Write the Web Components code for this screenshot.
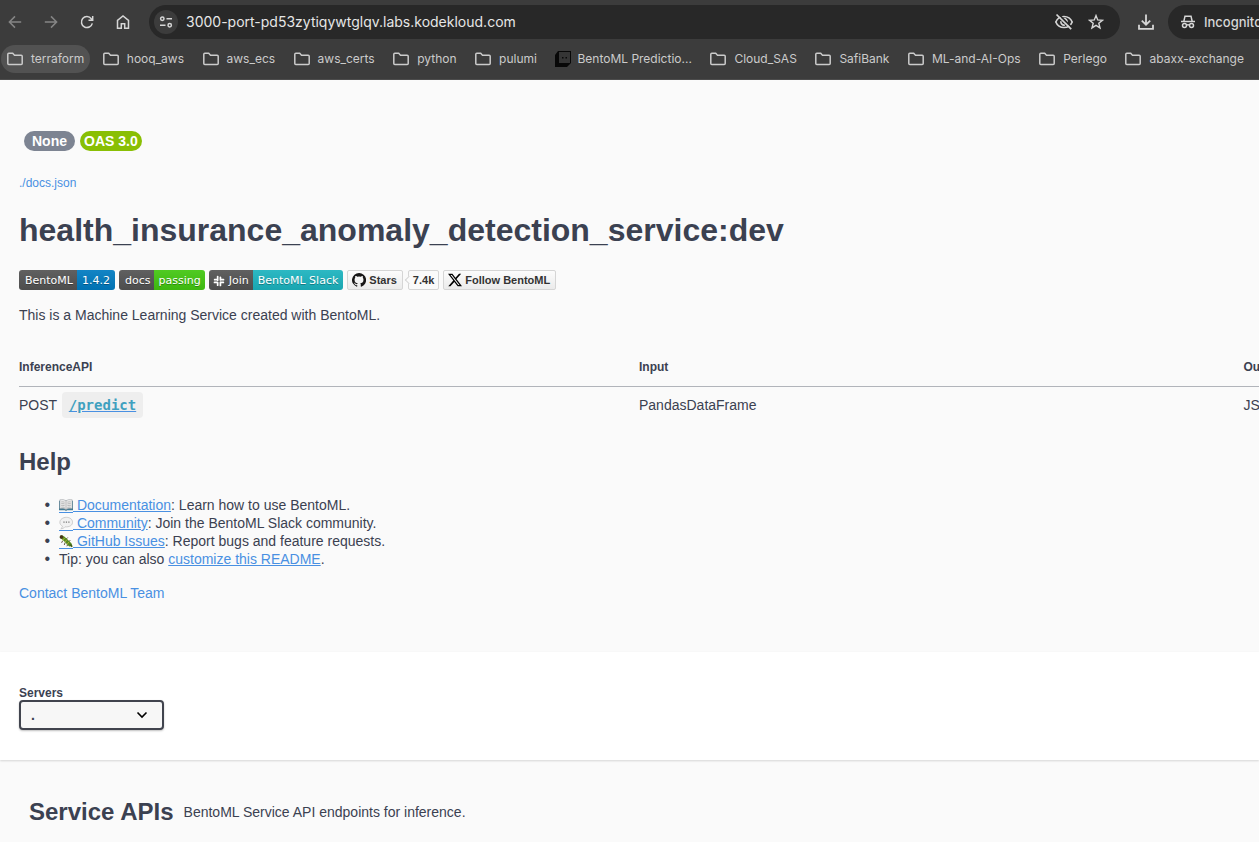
<!DOCTYPE html>
<html lang="en">
<head>
<meta charset="utf-8">
<title>health_insurance_anomaly_detection_service:dev</title>
<style>
  body { margin: 0; background: #fafafa; color: #3b4151; font-family: "Liberation Sans", Arial, sans-serif; font-size: 14px; line-height: 18px; overflow-x: clip; }
</style>
</head>
<body>
<app-page></app-page>
<script>
const define = (name, html) => {
  const template = document.createElement("template");
  template.innerHTML = html;
  customElements.define(name, class extends HTMLElement {
    constructor() {
      super();
      this.attachShadow({ mode: "open" }).append(template.content.cloneNode(true));
    }
  });
};

/* ---------- icons ---------- */
const stroke = (box, body, width = 1.6) =>
  `<svg viewBox="0 0 ${box} ${box}" fill="none" stroke="currentColor" stroke-width="${width}">${body}</svg>`;
const icons = {
  back: stroke(16, '<path d="M14.2 8H2.6M8 2.4 2.4 8 8 13.600"/>', 1.5),
  forward: stroke(16, '<path d="M1.800 8H13.400M8 2.400 13.600 8 8 13.600"/>', 1.5),
  reload: stroke(16, '<path d="M13.300 9.300A5.500 5.500 0 1 1 12.300 4.700L13.600 6.200M13.700 2V6.200H9.500"/>', 1.5),
  home: stroke(16, '<path d="M2.500 14.200V6.400L8 2l5.500 4.400v7.800H9.700V9.700H6.300v4.500z"/>', 1.5),
  tune: stroke(16, '<circle cx="4.300" cy="4.700" r="1.700"/><path d="M8.500 4.700H14M2 11.300h5.500"/><circle cx="11.700" cy="11.300" r="1.700"/>', 1.5),
  eye: stroke(20, '<path d="M1.800 10c1.500-3.600 4.600-5.500 8.200-5.500s6.700 1.900 8.200 5.500c-1.500 3.600-4.600 5.500-8.200 5.500S3.300 13.600 1.800 10z"/><path d="M12.900 11.300A3.200 3.200 0 0 0 9 6.900M7 9.200a3.200 3.200 0 0 0 3.800 3.900"/><path d="M4 1.600 18 15.700" stroke="#282828" stroke-width="1.800"/><path d="M2.500 2.500 17.200 17.200"/>', 1.7),
  star: stroke(16, '<path d="m8 1.600 1.700 4.300 4.700.4-3.600 3 1.200 4.600L8 11.400l-4 2.500 1.200-4.600-3.600-3 4.700-.4z"/>', 1.4),
  download: stroke(18, '<path d="M9 1.500v10M4.800 7.600 9 11.700l4.200-4.100M2 11.800v4h14v-4"/>', 1.8),
  incognito: '<svg viewBox="0 0 16 16" fill="none" stroke="currentColor" stroke-width="1.500"><path d="M3.900 7 5 2.200h6L12.100 7M1 7.400h14"/><circle cx="4.500" cy="11.500" r="2"/><circle cx="11.500" cy="11.500" r="2"/><path d="M6.500 11.200q1.500-.8 3 0"/></svg>',
  folder: stroke(16, '<path d="M.8 3.300q0-1 1-1h3.900l1.800 1.900h6.700q1 0 1 1v7.300q0 1-1 1H1.800q-1 0-1-1z"/>', 1.5),
  bento: '<svg viewBox="0 0 16 16"><path d="M3 0h13v12l-4 4H0V4z" fill="#080808"/><path d="M4 1h11v11H4z" fill="#353535"/><path d="M7 6h1.500v1.500H7zM10.500 6H12v1.500h-1.500z" fill="#080808"/></svg>',
  slack: '<svg viewBox="0 0 16 16" stroke="#fff" stroke-width="2.300" stroke-linecap="round" fill="none"><path d="M6.200 2v5M2.200 6.300h4M9.900 3v3.500M10 6.300h4M2 9.900h4M6.200 10v3.500M9.900 9.800V14M10 9.900h3.800"/></svg>',
  github: '<svg viewBox="0 0 16 16"><path fill="#181717" d="M8 0a8 8 0 0 0-2.530 15.590c.4.070.55-.17.55-.38v-1.340c-2.230.48-2.700-1.070-2.700-1.070-.36-.93-.89-1.170-.89-1.170-.73-.5.050-.49.050-.49.810.060 1.230.83 1.230.83.720 1.230 1.880.87 2.340.67.070-.52.280-.87.510-1.070-1.780-.2-3.640-.89-3.640-3.950 0-.87.310-1.590.82-2.150-.08-.2-.36-1.020.08-2.120 0 0 .67-.22 2.200.82a7.600 7.600 0 0 1 4 0c1.530-1.040 2.200-.82 2.200-.82.440 1.100.160 1.920.080 2.120.51.560.82 1.270.82 2.150 0 3.070-1.870 3.750-3.650 3.950.29.250.54.730.54 1.480v2.190c0 .21.15.46.55.38A8 8 0 0 0 8 0z"/></svg>',
  x: '<svg viewBox="0 0 24 24"><path fill="#000" d="M18.900 1.150h3.680l-8.040 9.190L24 22.850h-7.410l-5.800-7.590-6.640 7.590H.47l8.600-9.830L0 1.150h7.590l5.240 6.930zM17.610 20.640h2.040L6.490 3.240H4.300z"/></svg>',
  book: '<svg viewBox="0 0 16 16"><path d="M0 3h16v11H9L8 15l-1-1H0z" fill="#437a91"/><path d="M1 2q4-1 7 1 3-2 7-1v10q-4-1-7 1-3-2-7-1z" fill="#eceded" stroke="#9ba0a3" stroke-width=".6"/><path d="M8 3v10M2.500 4.500q2-.4 4 .3M2.500 6.500q2-.4 4 .3M2.500 8.500q2-.4 4 .3M2.500 10.500q2-.4 4 .3M9.500 4.800q2-.7 4-.3M9.500 6.800q2-.7 4-.3M9.500 8.800q2-.7 4-.3M9.500 10.800q2-.7 4-.3" stroke="#999" stroke-width=".7" fill="none"/></svg>',
  speech: '<svg viewBox="0 0 16 16"><path d="M8.500 1.500C4.500 1.500 1 3.900 1 7.200c0 2 1.200 3.500 3 4.500-.2 1.300-.9 2.300-2 3 2.200-.1 3.800-1 4.800-2.300 5 .5 8.700-1.800 8.700-5.200 0-3.300-3-5.700-7-5.700z" fill="#f1f1f1" stroke="#bbb" stroke-width=".8"/><path d="M5 7h1.400M7.800 7h1.400M10.600 7H12" stroke="#777" stroke-width="1.500"/></svg>',
  bug: '<svg viewBox="0 0 16 16"><path d="M2 2.500 4.500 5M8 6l2-2M4 8l-1 2M7 10l-1 2.500M11 8.500l2-1M10 12l-1 2" stroke="#493422" stroke-width="1"/><path d="M3 3.500C6 4.500 8 8 12.500 12" stroke="#568a20" stroke-width="4.300" fill="none" stroke-linecap="round"/><path d="M6.500 4.500 4 7.500M9 6.500 6.500 9.500M11.500 9 9 12" stroke="#b8b535" stroke-width="1"/><circle cx="2.800" cy="3.300" r="2" fill="#4b311c"/><path d="m13 12 2 2.500" stroke="#3e5a16" stroke-width="2"/></svg>',
  chevron: stroke(12, '<path d="m1.500 3.500 4.500 4.500 4.500-4.500"/>', 1.6)
};

customElements.define("ui-icon", class extends HTMLElement {
  constructor() {
    super();
    this.attachShadow({ mode: "open" });
  }
  connectedCallback() {
    this.shadowRoot.innerHTML = `<style>
      :host { display: block; flex: none; width: var(--icon-size, 16px); height: var(--icon-size, 16px); }
      svg { display: block; width: 100%; height: 100%; }
    </style>${icons[this.getAttribute("name")]}`;
  }
});

/* ---------- browser bars ---------- */
define("browser-toolbar", `<style>
  :host { display: flex; align-items: center; height: 34px; padding: 5px 0 0 7px; color: #d6d6d6; font: 500 13px/20px Inter, sans-serif; }
  button { font: inherit; color: inherit; background: none; border: 0; padding: 0; display: flex; align-items: center; justify-content: center; }
  .nav { display: flex; gap: 20px; }
  .nav button { width: 16px; height: 28px; }
  .nav .off { color: #858585; }
  .address { flex: 1; display: flex; align-items: center; box-sizing: border-box; height: 34px; margin-left: 18px; padding: 0 16px 0 5px; background: #282828; border-radius: 17px; }
  .tune { width: 24px; height: 24px; border-radius: 12px; background: #3c3c3c; }
  input { flex: 1; min-width: 0; font: 400 14px/20px Inter, sans-serif; color: #e6e6e6; background: none; border: 0; padding: 0; margin: 0 8px; outline: 0; }
  .eye { --icon-size: 20px; margin-right: 14px; }
  .download { --icon-size: 18px; margin: 0 13px 0 17px; }
  .incognito { height: 34px; width: 91px; padding-left: 12px; gap: 8px; justify-content: flex-start; background: #282828; border-radius: 17px 0 0 17px; white-space: nowrap; overflow: hidden; }
</style>
<nav class="nav" aria-label="History">
  <button class="off" aria-label="Back"><ui-icon name="back"></ui-icon></button>
  <button class="off" aria-label="Forward"><ui-icon name="forward"></ui-icon></button>
  <button aria-label="Reload"><ui-icon name="reload"></ui-icon></button>
  <button aria-label="Home"><ui-icon name="home"></ui-icon></button>
</nav>
<div class="address">
  <button class="tune" aria-label="Site information"><ui-icon name="tune"></ui-icon></button>
  <input type="text" aria-label="Address" value="3000-port-pd53zytiqywtglqv.labs.kodekloud.com">
  <button class="eye" aria-label="Tracking protection"><ui-icon name="eye"></ui-icon></button>
  <button aria-label="Bookmark this page"><ui-icon name="star"></ui-icon></button>
</div>
<button class="download" aria-label="Downloads"><ui-icon name="download"></ui-icon></button>
<button class="incognito"><ui-icon name="incognito"></ui-icon>Incognito</button>`);

customElements.define("bookmark-link", class extends HTMLElement {
  constructor() {
    super();
    this.attachShadow({ mode: "open" });
  }
  connectedCallback() {
    this.shadowRoot.innerHTML = `<style>
      :host { display: block; flex: none; }
      a { display: flex; align-items: center; gap: 8px; height: 28px; padding: 0 6px; border-radius: 14px; color: #cbcbcb; text-decoration: none; white-space: nowrap; }
      :host([active]) a { background: #525252; }
      :host([icon]) a { gap: 6px; }
    </style><a href="#"><ui-icon name="${this.getAttribute("icon") || "folder"}"></ui-icon><slot></slot></a>`;
  }
});

define("bookmarks-bar", `<style>
  :host { display: flex; justify-content: space-between; gap: 6px; padding: 6px 9px 6px 1px; font: 400 12px/18px Inter, sans-serif; overflow: hidden; border-bottom: 1px solid #4c4c4c; }
</style>
<bookmark-link active>terraform</bookmark-link><bookmark-link>hooq_aws</bookmark-link><bookmark-link>aws_ecs</bookmark-link><bookmark-link>aws_certs</bookmark-link><bookmark-link>python</bookmark-link><bookmark-link>pulumi</bookmark-link><bookmark-link icon="bento">BentoML Predictio...</bookmark-link><bookmark-link>Cloud_SAS</bookmark-link><bookmark-link>SafiBank</bookmark-link><bookmark-link>ML-and-AI-Ops</bookmark-link><bookmark-link>Perlego</bookmark-link><bookmark-link>abaxx-exchange</bookmark-link>`);

/* ---------- documentation ---------- */
define("version-pill", `<style>
  :host { display: block; padding: 0 4px; border-radius: 10px; background: #89bf04; color: #fff; font-weight: 700; font-size: 14px; line-height: 20px; }
  :host([muted]) { background: #7d8492; padding: 0 8px; }
</style><slot></slot>`);

define("shield-badge", `<style>
  :host { display: flex; height: 20px; border-radius: 3px; overflow: hidden; color: #fff; font: 11px/18px "DejaVu Sans", sans-serif; text-shadow: 0 1px 0 rgba(1,1,1,.3); }
  a { display: flex; color: inherit; text-decoration: none; }
  span { display: flex; align-items: center; gap: 4px; padding: 2px 4px 0 6px; background: linear-gradient(#606060, #4d4d4d); --icon-size: 12px; }
  :host([tight]) span { padding: 2px 4px 0; }
  span.value, :host([tight]) span.value { padding: 2px var(--value-pad, 5px) 0; background: linear-gradient(rgba(187,187,187,.1), rgba(0,0,0,.1)) var(--badge, #007ec6); }
</style><a href="#"><span><slot name="label"></slot></span><span class="value"><slot></slot></span></a>`);

define("social-badge", `<style>
  :host { display: block; }
  a { display: flex; align-items: center; gap: 3px; box-sizing: border-box; height: 20px; padding: 0 5px 0 4px; border: 1px solid #d5d5d5; border-radius: 2px; background: linear-gradient(#fcfcfc, #ebebeb); color: #333; text-decoration: none; font: 700 11px/18px "Liberation Sans", sans-serif; --icon-size: 14px; }
  :host([count]) a { position: relative; padding: 0 4px; background: #fafafa; }
  :host([count]) a::before { content: ""; position: absolute; left: -3px; top: 6px; width: 5px; height: 5px; transform: rotate(45deg); background: #fafafa; border: 1px solid #d5d5d5; border-width: 0 0 1px 1px; }
</style><a href="#"><slot></slot></a>`);

define("badge-row", `<style>
  :host { display: flex; gap: 4px; }
  .green { --badge: #44cc11; --value-pad: 4px; }
  .cyan { --badge: #1cb8c4; }
  .stars { display: flex; gap: 5px; }
</style>
<shield-badge><span slot="label">BentoML</span>1.4.2</shield-badge>
<shield-badge class="green"><span slot="label">docs</span>passing</shield-badge>
<shield-badge class="cyan" tight><ui-icon slot="label" name="slack"></ui-icon><span slot="label">Join</span>BentoML Slack</shield-badge>
<div class="stars"><social-badge><ui-icon name="github"></ui-icon>Stars</social-badge><social-badge count>7.4k</social-badge></div>
<social-badge><ui-icon name="x"></ui-icon>Follow BentoML</social-badge>`);

define("api-table", `<style>
  :host { display: block; overflow: hidden; }
  table { width: 125%; table-layout: fixed; border-collapse: collapse; text-align: left; }
  th { font-size: 12px; line-height: 18px; padding: 0 0 10px; border-bottom: 1px solid #b1b4ba; }
  td { padding: 5px 0 0; line-height: 26px; }
  code { margin-left: 1px; padding: 5px 7px; border-radius: 4px; background: #eee; font: 700 14px/16px "DejaVu Sans Mono", monospace; }
  a { color: #3fa0bf; text-decoration-color: #4990e2; }
  .api { width: 40%; } .input { width: 39%; }
</style>
<table>
  <thead><tr><th class="api">InferenceAPI</th><th class="input">Input</th><th>Output</th></tr></thead>
  <tbody><tr><td>POST <code><a href="#">/predict</a></code></td><td>PandasDataFrame</td><td>JSON</td></tr></tbody>
</table>`);

define("help-list", `<style>
  :host { display: block; }
  ul { margin: 0; padding: 0 0 0 40px; list-style-type: "•\\00a0\\00a0"; }
  li::marker { font-size: 16px; }
  a { color: #4990e2; }
  ui-icon { display: inline-block; vertical-align: -2px; --icon-size: 14px; box-shadow: 0 1px #4990e2; }
</style>
<ul>
  <li><a href="#"><ui-icon name="book"></ui-icon> Documentation</a>: Learn how to use BentoML.</li>
  <li><a href="#"><ui-icon name="speech"></ui-icon> Community</a>: Join the BentoML Slack community.</li>
  <li><a href="#"><ui-icon name="bug"></ui-icon> GitHub Issues</a>: Report bugs and feature requests.</li>
  <li>Tip: you can also <a href="#">customize this README</a>.</li>
</ul>`);

define("service-info", `<style>
  :host { display: block; padding: 51px 0 50px 19px; }
  .versions { display: flex; gap: 5px; padding-left: 5px; }
  .spec { display: block; margin-top: 23px; font-size: 12px; }
  a { color: #4990e2; text-decoration: none; }
  h1, h2, p { margin: 0; }
  h1 { margin-top: 19px; font-size: 32px; line-height: 38px; }
  badge-row { margin-top: 21px; }
  p { margin-top: 16px; }
  api-table { margin-top: 34px; }
  h2 { margin-top: 30px; font-size: 24px; line-height: 28px; }
  help-list { margin-top: 20px; }
  .contact { display: block; margin-top: 16px; }
</style>
<div class="versions"><version-pill muted>None</version-pill><version-pill>OAS 3.0</version-pill></div>
<a class="spec" href="#">./docs.json</a>
<h1>health_insurance_anomaly_detection_service:dev</h1>
<badge-row></badge-row>
<p>This is a Machine Learning Service created with BentoML.</p>
<api-table></api-table>
<h2>Help</h2>
<help-list></help-list>
<a class="contact" href="#">Contact BentoML Team</a>`);

define("server-picker", `<style>
  :host { display: block; padding: 34px 19px 30px; background: #fff; box-shadow: 0 1px 2px rgba(0,0,0,.15); }
  label { display: block; font-weight: 700; font-size: 12px; line-height: 14px; }
  .field { display: grid; width: max-content; align-items: center; }
  select, ui-icon { grid-area: 1 / 1; }
  select { appearance: none; box-sizing: border-box; width: 145px; height: 30px; padding: 0 10px; border: 2px solid #41444e; border-radius: 4px; background: #f7f7f7; color: #3b4151; font: 700 14px/20px "Liberation Sans", sans-serif; box-shadow: 0 1px 2px rgba(0,0,0,.25); }
  ui-icon { justify-self: end; margin-right: 16px; color: #000; pointer-events: none; --icon-size: 12px; }
</style>
<label for="server">Servers</label>
<div class="field"><select id="server"><option>.</option></select><ui-icon name="chevron"></ui-icon></div>`);

define("api-section", `<style>
  :host { display: flex; align-items: center; gap: 10px; padding: 38px 29px 14px; }
  h2, p { margin: 0; }
  h2 { font-size: 24px; line-height: 28px; }
</style><h2>Service APIs</h2><p>BentoML Service API endpoints for inference.</p>`);

define("app-page", `<style>
  :host { display: block; }
  header { background: #3c3c3c; }
</style>
<header><browser-toolbar></browser-toolbar><bookmarks-bar></bookmarks-bar></header>
<main><service-info></service-info><server-picker></server-picker><api-section></api-section></main>`);
</script>
</body>
</html>
